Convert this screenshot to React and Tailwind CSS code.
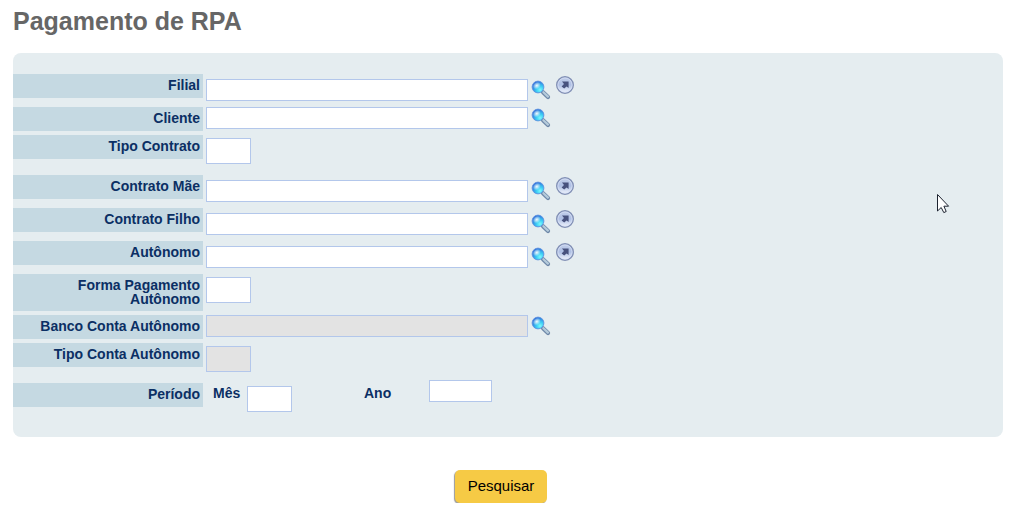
import { useState } from "react";

const boxClass = "border border-[#b3c7eb] bg-white px-1 text-sm text-[#0b2f64] outline-none disabled:bg-[#e3e3e3]";

const labelClass =
  "w-[190px] flex-shrink-0 min-h-6 bg-[#c5d9e2] pt-1 pb-[5px] pl-6 pr-[3px] text-right text-sm leading-[14px] font-bold text-[#0b2f64]";

const fields = [
  { id: "filial", label: "Filial", kind: "link" },
  { id: "cliente", label: "Cliente", kind: "lookup" },
  { id: "tipoContrato", label: "Tipo Contrato", kind: "select" },
  { id: "contratoMae", label: "Contrato Mãe", kind: "link" },
  { id: "contratoFilho", label: "Contrato Filho", kind: "link" },
  { id: "autonomo", label: "Autônomo", kind: "link" },
  { id: "formaPagamento", label: "Forma Pagamento Autônomo", kind: "select" },
  { id: "bancoConta", label: "Banco Conta Autônomo", kind: "lookup", disabled: true },
  { id: "tipoConta", label: "Tipo Conta Autônomo", kind: "select", disabled: true },
];

function SearchIcon() {
  return (
    <svg className="w-5 h-5" viewBox="0 0 20 20" fill="none">
      <defs>
        <radialGradient id="lens" cx="0.68" cy="0.74" r="0.78">
          <stop offset="0" stopColor="#7dfbfb" />
          <stop offset="0.4" stopColor="#3ccdf5" />
          <stop offset="1" stopColor="#2f68d8" />
        </radialGradient>
        <radialGradient id="glow" cx="0.5" cy="0.5" r="0.5">
          <stop offset="0" stopColor="#fff" stopOpacity="0.95" />
          <stop offset="1" stopColor="#fff" stopOpacity="0" />
        </radialGradient>
      </defs>
      <path d="M12 12.2L17 17" stroke="#6e88a8" strokeWidth="4.2" strokeLinecap="round" />
      <path d="M12.4 12.2L17 16.6" stroke="#b5cbdb" strokeWidth="2.2" strokeLinecap="round" />
      <circle cx="7" cy="7" r="5.9" fill="url(#lens)" stroke="#5d93df" strokeWidth="0.9" />
      <ellipse cx="5.8" cy="5.6" rx="4.2" ry="3.4" fill="url(#glow)" transform="rotate(-35 5.8 5.6)" />
    </svg>
  );
}

function OpenIcon() {
  return (
    <svg className="w-5 h-5" viewBox="0 0 20 20" fill="none">
      <defs>
        <linearGradient id="disc" x1="0" y1="0" x2="0" y2="1">
          <stop offset="0" stopColor="#c3cfea" />
          <stop offset="0.5" stopColor="#aebfe4" />
          <stop offset="1" stopColor="#f6f9ff" />
        </linearGradient>
      </defs>
      <circle cx="10" cy="10" r="8.3" fill="url(#disc)" stroke="#8290b5" strokeWidth="1.4" />
      <circle cx="10" cy="10" r="7.1" stroke="#d6e0f5" strokeWidth="0.8" />
      <path d="M7 6.6H13.6V13L11.6 11.4L9.2 13.6L6.6 11.6L9 9Z" fill="#48527e" />
    </svg>
  );
}

function Field({ id, label, kind, disabled }) {
  const [value, setValue] = useState("");

  return (
    <div className="flex items-start gap-[3px]">
      <div className={kind === "select" ? "pb-1" : ""}>
        <label htmlFor={id} className={`block ${labelClass}`}>
          {label}
        </label>
      </div>

      {kind === "select" ? (
        <div className="pt-[3px] pb-[11px]">
          <select
            id={id}
            disabled={disabled}
            className={`block appearance-none w-[45px] h-[26px] opacity-100 ${boxClass}`}
          />
        </div>
      ) : (
        <div className={`flex items-start pb-[6px] ${kind === "link" ? "pt-[5px]" : ""}`}>
          <input
            id={id}
            type="text"
            value={value}
            disabled={disabled}
            onChange={(e) => setValue(e.target.value)}
            className={`w-[322px] h-[22px] ${boxClass}`}
          />
          <button type="button" aria-label={`Pesquisar ${label}`} className="ml-[3px] mt-px h-5 cursor-pointer">
            <SearchIcon />
          </button>
          {kind === "link" && (
            <button type="button" aria-label={`Abrir ${label}`} className="ml-1 -mt-1 h-5 cursor-pointer">
              <OpenIcon />
            </button>
          )}
        </div>
      )}
    </div>
  );
}

function Periodo() {
  return (
    <div role="group" aria-labelledby="periodo" className="flex items-start -mt-[3px] text-sm leading-[14px] font-bold text-[#0b2f64]">
      <div className="pt-[3px]">
        <div id="periodo" className={labelClass}>
          Período
        </div>
      </div>
      <label htmlFor="mes" className="w-[34px] ml-[10px] pt-[6px]">
        Mês
      </label>
      <div className="pt-[6px]">
        <select id="mes" className={`block appearance-none w-[45px] h-[26px] ${boxClass}`} />
      </div>
      <label htmlFor="ano" className="w-[65px] ml-[72px] pt-[6px]">
        Ano
      </label>
      <input id="ano" type="text" className={`w-[63px] h-[22px] ${boxClass}`} />
    </div>
  );
}

function Cursor() {
  return (
    <svg className="absolute top-[140px] right-[53px] w-[14px] h-[22px] pointer-events-none" viewBox="0 0 14 22">
      <path
        d="M1.5 1.5V18L5.2 14.5L7.8 19.6L10.2 18.5L7.9 13.2H12.6Z"
        fill="#fff"
        stroke="#1d2330"
        strokeWidth="1"
      />
    </svg>
  );
}

export default function App() {
  return (
    <main className="pt-1 pl-[13px] pr-[25px] font-['Liberation_Sans',Arial,sans-serif]">
      <h1 className="text-[25px] leading-[34px] font-bold text-[#666]">Pagamento de RPA</h1>

      <form onSubmit={(e) => e.preventDefault()}>
        <div className="relative mt-[15px] pt-[21px] pb-[25px] rounded-lg bg-[#e5edf0]">
          {fields.map((f) => (
            <Field key={f.id} {...f} />
          ))}
          <Periodo />
          <Cursor />
        </div>

        <div className="flex justify-center mt-[33px] pr-[14px]">
          <button
            type="submit"
            className="h-[33px] px-[13px] rounded-[5px] bg-[#f6ca45] text-[15px] text-black shadow-[-1px_1px_1px_#999] cursor-pointer"
          >
            Pesquisar
          </button>
        </div>
      </form>
    </main>
  );
}
